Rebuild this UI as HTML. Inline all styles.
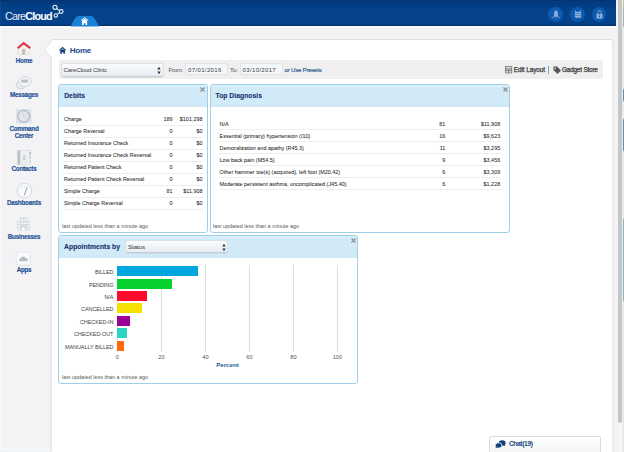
<!DOCTYPE html>
<html><head><meta charset="utf-8"><style>
html,body{margin:0;padding:0;}
body{width:624px;height:452px;overflow:hidden;position:relative;background:#f3f3f6;font-family:"Liberation Sans", sans-serif;}
.a{position:absolute;}
.t{position:absolute;white-space:nowrap;}
svg.a{overflow:visible;}
</style></head><body>
<div class="a" style="left:0px;top:0px;width:616px;height:26px;background:linear-gradient(#012f6a 0,#023a7c 1px,#033e84 6px,#04428a 12px,#04418a 24px,#02366f 25px,#023570 26px);"></div>
<div class="a" style="left:0px;top:26px;width:616px;height:2px;background:linear-gradient(#ffffff,#f7f7f9);"></div>
<div class="a" style="left:0px;top:2px;width:1px;height:23px;background:#12468a;"></div>
<div class="a" style="left:0px;top:28px;width:1px;height:421px;background:#f9f9fb;"></div>
<div class="t" style="left:5px;top:10.86px;font-size:10.8px;line-height:10.8px;color:#fff;font-weight:normal;letter-spacing:-0.8px;"><span style="font-weight:normal;color:#e4ebf5">Care</span><span style="font-weight:bold">Cloud</span></div>
<svg class="a" style="left:50px;top:3px" width="16" height="16" viewBox="0 0 16 16">
<g fill="none" stroke="#e8eef6" stroke-width="1.1">
<circle cx="5" cy="4.3" r="2.1"/><circle cx="11.2" cy="8.5" r="1.9"/><circle cx="5.8" cy="12.4" r="1.7"/>
<line x1="6.6" y1="5.5" x2="9.4" y2="7.6"/><line x1="9.6" y1="9.6" x2="7" y2="11.4"/>
</g></svg>
<svg class="a" style="left:70px;top:15px" width="30" height="12" viewBox="0 0 30 12">
<path d="M0.5 11.6 L4.6 4 Q6.2 1 8.5 1 L20.8 1 Q23.2 1 24.8 4 L29.3 11.6 Z" fill="#1a7fd6"/>
<path d="M11 5.4 L14.6 2.6 L18.2 5.4" fill="none" stroke="#fff" stroke-width="0.9"/>
<path d="M12 5.6 L14.6 3.8 L17.2 5.6 L17.2 10 L15.5 10 L15.5 8.3 L13.7 8.3 L13.7 10 L12 10 Z" fill="#fff"/>
</svg>
<div class="a" style="left:548.4000000000001px;top:7px;width:14.6px;height:14.6px;border-radius:50%;background:#0b59b0;"></div>
<div class="a" style="left:570.3000000000001px;top:7px;width:14.6px;height:14.6px;border-radius:50%;background:#0b59b0;"></div>
<div class="a" style="left:591.5px;top:7px;width:14.6px;height:14.6px;border-radius:50%;background:#0b59b0;"></div>
<svg class="a" style="left:551px;top:9.5px" width="10" height="9" viewBox="0 0 10 9">
<path d="M5 0.6 C3.6 0.6 3.1 2 3.1 3.5 L3.1 5.6 L2.2 6.8 L7.8 6.8 L6.9 5.6 L6.9 3.5 C6.9 2 6.4 0.6 5 0.6 Z" fill="#8fb0d4"/>
<path d="M1 8 L3 6.8 M9 8 L7 6.8 M5 6.8 L5 8.6" stroke="#8fb0d4" stroke-width="0.7"/>
</svg>
<svg class="a" style="left:573.5px;top:10px" width="8" height="8" viewBox="0 0 8 8">
<path d="M1 0.4 L2.4 1.8 L5.6 1.8 L7 0.4 L7 3.4 L1 3.4 Z" fill="#8fb0d4"/>
<rect x="0.6" y="3.9" width="6.8" height="1.2" fill="#8fb0d4"/>
<path d="M0.8 5.6 L7.2 5.6 L7.2 6.6 Q7.2 7.8 6 7.8 L2 7.8 Q0.8 7.8 0.8 6.6 Z" fill="#8fb0d4"/>
</svg>
<svg class="a" style="left:595.5px;top:9.8px" width="7" height="9" viewBox="0 0 7 9">
<path d="M1.8 4 L1.8 2.6 Q1.8 0.7 3.5 0.7 Q5.2 0.7 5.2 2.6 L5.2 4" fill="none" stroke="#8fb0d4" stroke-width="0.9"/>
<rect x="0.5" y="4" width="6" height="4.6" fill="#8fb0d4"/>
<rect x="3" y="5.4" width="1" height="1.8" fill="#0c58ad"/>
</svg>
<div class="a" style="left:616px;top:0px;width:2px;height:452px;background:#f3f3f3;"></div>
<div class="a" style="left:618px;top:0px;width:4px;height:452px;background:#f6f6f6;"></div>
<div class="a" style="left:618px;top:0px;width:4px;height:423px;background:#c6c6c6;border-radius:0 0 2px 2px;"></div>
<div class="a" style="left:622px;top:0px;width:1px;height:452px;background:#ececec;"></div>
<div class="a" style="left:623px;top:0px;width:1px;height:452px;background:linear-gradient(#d9c7a2 0,#c8b896 8px,#9fb0c8 12px,#9fb0c8 26px,#ececec 28px,#ececec 88px,#5f8fbf 90px,#5f8fbf 100px,#ececec 102px,#ececec 118px,#5b8dbc 120px,#5b8dbc 150px,#e6e6e6 152px,#e6e6e6 218px,#86b6cc 220px,#86b6cc 300px,#e8e8e8 302px,#e8e8e8 452px);"></div>
<svg class="a" style="left:40px;top:36px" width="580" height="416" viewBox="0 0 580 416">
<path d="M11.5 22 L11.5 420 L573 420 L573 6 Q573 3.5 570.5 3.5 L12.8 3.5 L4.2 13.3 Z" fill="#fff" stroke="#dedede" stroke-width="1"/>
</svg>
<div class="a" style="left:49.5px;top:57px;width:1.5px;height:395px;background:#e8e8ec;"></div>
<div class="a" style="left:51px;top:57px;width:1px;height:395px;background:repeating-linear-gradient(#d9dde5 0 1px,#eef0f3 1px 3px);"></div>
<div class="a" style="left:0px;top:449px;width:49.5px;height:1px;background:#fbfbfc;"></div>
<div class="a" style="left:0px;top:450px;width:51px;height:2px;background:#eef4f5;"></div>
<div class="t" style="left:-76px;width:200px;text-align:center;top:58.27px;font-size:6.3px;line-height:6.3px;color:#1c5295;font-weight:bold;letter-spacing:-0.25px;-webkit-text-stroke:0.15px #1c5295;">Home</div>
<div class="t" style="left:-76px;width:200px;text-align:center;top:92.47px;font-size:6.3px;line-height:6.3px;color:#1c5295;font-weight:bold;letter-spacing:-0.25px;-webkit-text-stroke:0.15px #1c5295;">Messages</div>
<div class="t" style="left:-76px;width:200px;text-align:center;top:126.17px;font-size:6.3px;line-height:6.3px;color:#1c5295;font-weight:bold;letter-spacing:-0.25px;-webkit-text-stroke:0.15px #1c5295;">Command</div>
<div class="t" style="left:-76px;width:200px;text-align:center;top:133.07px;font-size:6.3px;line-height:6.3px;color:#1c5295;font-weight:bold;letter-spacing:-0.25px;-webkit-text-stroke:0.15px #1c5295;">Center</div>
<div class="t" style="left:-76px;width:200px;text-align:center;top:166.47px;font-size:6.3px;line-height:6.3px;color:#1c5295;font-weight:bold;letter-spacing:-0.25px;-webkit-text-stroke:0.15px #1c5295;">Contacts</div>
<div class="t" style="left:-76px;width:200px;text-align:center;top:200.17px;font-size:6.3px;line-height:6.3px;color:#1c5295;font-weight:bold;letter-spacing:-0.25px;-webkit-text-stroke:0.15px #1c5295;">Dashboards</div>
<div class="t" style="left:-76px;width:200px;text-align:center;top:234.27px;font-size:6.3px;line-height:6.3px;color:#1c5295;font-weight:bold;letter-spacing:-0.25px;-webkit-text-stroke:0.15px #1c5295;">Businesses</div>
<div class="t" style="left:-76px;width:200px;text-align:center;top:266.77px;font-size:6.3px;line-height:6.3px;color:#1c5295;font-weight:bold;letter-spacing:-0.25px;-webkit-text-stroke:0.15px #1c5295;">Apps</div>
<svg class="a" style="left:16px;top:41px" width="16" height="14" viewBox="0 0 16 14">
<path d="M2 5.8 L7.6 1.6 L13.8 5.8 L13.8 13.6 L2 13.6 Z" fill="#f1f0ef" stroke="#dcdad8" stroke-width="0.6"/>
<rect x="6.1" y="8" width="3.2" height="5.6" fill="#c9bcb2"/>
<path d="M1.6 7.2 L7.6 2.2 L14.3 7.2" fill="none" stroke="#e1344a" stroke-width="2.1" stroke-linejoin="miter"/>
</svg>
<svg class="a" style="left:15px;top:76px" width="17" height="14" viewBox="0 0 17 14">
<path d="M5.5 5.5 C2.8 5.5 1.3 7.2 1.3 9 C1.3 10.8 2.6 12.3 5.2 12.7 L5.6 13.4 L6.6 12.6 C8.8 12.3 9.8 10.6 9.8 9.2" fill="#e9eef3" stroke="#b9c4d0" stroke-width="0.7"/>
<ellipse cx="10" cy="5.6" rx="6.2" ry="4.8" fill="#f4f7fa" stroke="#c2cad3" stroke-width="0.8"/>
<rect x="6.2" y="3.6" width="7" height="3" fill="#bcc0c6"/>
<path d="M7.5 10.6 L8.3 12.6 L10 10.3" fill="#f4f7fa" stroke="#c2cad3" stroke-width="0.6"/>
</svg>
<svg class="a" style="left:16px;top:109.3px" width="15.5" height="14.5" viewBox="0 0 15.5 14.5">
<rect x="0" y="0" width="15.5" height="14.5" fill="#dde3ea"/>
<circle cx="7.7" cy="7.3" r="6.1" fill="#d3d8de" stroke="#a8afb7" stroke-width="0.9"/>
<circle cx="7.7" cy="7.3" r="4.6" fill="#e3e7ec"/>
<path d="M7.2 3.6 L7.7 7.3 L9.5 9" fill="none" stroke="#c3cad3" stroke-width="0.7"/>
</svg>
<svg class="a" style="left:17px;top:150px" width="14" height="15" viewBox="0 0 14 15">
<rect x="0.4" y="0.4" width="12.4" height="14.2" fill="#eef1f4" stroke="#d4d8dc" stroke-width="0.6"/>
<rect x="0.6" y="0.6" width="2.6" height="13.8" fill="#bfbfbf"/>
<rect x="12.6" y="2" width="1.2" height="3" fill="#b4b4b4"/><rect x="12.6" y="6.3" width="1.2" height="2.6" fill="#c4c8cc"/><rect x="12.6" y="10" width="1.2" height="2.4" fill="#d0d4d8"/>
<rect x="6.5" y="5.5" width="1.3" height="1.9" fill="#b0b0b0"/><path d="M5.5 9 L9 9" stroke="#b5b5b5" stroke-width="1"/>
<path d="M5 11.6 L10.5 11.6" stroke="#d8dce0" stroke-width="0.5"/>
</svg>
<svg class="a" style="left:15.5px;top:183px" width="17" height="16" viewBox="0 0 17 16">
<circle cx="8.5" cy="7.7" r="7.3" fill="#fafbfc" stroke="#cdd3da" stroke-width="0.9"/>
<path d="M11.2 4.3 L8.2 12.5" stroke="#8d99a8" stroke-width="1"/>
<path d="M4.5 5 Q8 2.8 11.5 4" fill="none" stroke="#b8c2cd" stroke-width="0.7" stroke-dasharray="1 0.8"/>
</svg>
<svg class="a" style="left:17px;top:217px" width="13" height="14" viewBox="0 0 13 14">
<path d="M2.6 0.5 L10.3 0.5 L10.3 4 L12.6 4 L12.6 13.8 L0.3 13.8 L0.3 4 L2.6 4 Z" fill="#d3dbe3"/>
<g fill="#f6f8fa">
<rect x="3.5" y="2" width="2.2" height="1.8"/><rect x="7.2" y="2" width="2.2" height="1.8"/>
<rect x="1.2" y="5.3" width="2" height="1.8"/><rect x="4.3" y="5.3" width="2" height="1.8"/><rect x="7.3" y="5.3" width="2" height="1.8"/><rect x="10.2" y="5.3" width="1.6" height="1.8"/>
<rect x="1.2" y="8.3" width="2" height="1.8"/><rect x="10.2" y="8.3" width="1.6" height="1.8"/>
<rect x="1.2" y="11.2" width="2" height="1.8"/><rect x="10.2" y="11.2" width="1.6" height="1.8"/>
<path d="M4.8 13.8 L4.8 10.8 Q6.45 9 8.1 10.8 L8.1 13.8 Z"/>
</g>
</svg>
<svg class="a" style="left:16px;top:251.5px" width="15" height="14" viewBox="0 0 15 14">
<rect x="0.4" y="0.4" width="14" height="13.2" rx="1.8" fill="#f8fafc" stroke="#dde2e8" stroke-width="0.7"/>
<path d="M4.6 9.2 Q2.8 9.2 2.8 7.9 Q2.8 6.5 4.4 6.6 Q4.9 4.3 7.3 4.4 Q9.4 4.5 9.8 6.2 Q12 6 12 7.8 Q12 9.2 10.5 9.2 Z" fill="#b9bdc2"/>
<path d="M1 12.2 L14 12.2" stroke="#e6eaee" stroke-width="0.6"/>
</svg>
<svg class="a" style="left:58.5px;top:47.3px" width="7.2" height="6.8" viewBox="0 0 7.2 6.8">
<path d="M0.4 3.4 L3.6 0.6 L6.8 3.4" fill="none" stroke="#133f7c" stroke-width="1.2"/>
<path d="M1.2 3.6 L3.6 1.9 L6 3.6 L6 6.8 L4.4 6.8 L4.4 5.2 L2.8 5.2 L2.8 6.8 L1.2 6.8 Z" fill="#133f7c"/>
</svg>
<div class="t" style="left:69.7px;top:47.34px;font-size:8.1px;line-height:8.1px;color:#1a4b90;font-weight:bold;letter-spacing:-0.3px;">Home</div>
<div class="a" style="left:58.5px;top:60px;width:544px;height:19px;background:#efefef;border-radius:2px;"></div>
<div class="a" style="left:60.5px;top:63px;width:103.5px;height:13.8px;box-sizing:border-box;border:1px solid #dbe0e7;border-bottom-color:#c5ccd5;border-radius:3px;background:linear-gradient(#fafbfd,#e8ecf1);box-shadow:0 0.6px 0.6px rgba(60,80,110,0.18);"></div>
<div class="t" style="left:63.5px;top:67.04px;font-size:6.1px;line-height:6.1px;color:#3a3a3a;font-weight:normal;letter-spacing:-0.14px;">CareCloud Clinic</div>
<svg class="a" style="left:157px;top:65.5px" width="4" height="9" viewBox="0 0 4 9"><path d="M0.3 3.5 L2 0.8 L3.7 3.5Z M0.3 5.5 L2 8.2 L3.7 5.5Z" fill="#1f3350"/></svg>
<div class="t" style="left:168.5px;top:67.12px;font-size:6.0px;line-height:6.0px;color:#505050;font-weight:normal;letter-spacing:-0.24px;">From:</div>
<div class="a" style="left:185px;top:62.8px;width:43px;height:12.6px;box-sizing:border-box;border:1px solid #dfe3e8;border-radius:2px;background:#f4f7fa;"></div>
<div class="t" style="left:188px;top:67.12px;font-size:6.0px;line-height:6.0px;color:#404040;font-weight:normal;letter-spacing:0.37px;">07/01/2016</div>
<div class="t" style="left:230px;top:67.12px;font-size:6.0px;line-height:6.0px;color:#505050;font-weight:normal;">To:</div>
<div class="a" style="left:240px;top:62.8px;width:42.5px;height:12.6px;box-sizing:border-box;border:1px solid #dfe3e8;border-radius:2px;background:#f4f7fa;"></div>
<div class="t" style="left:242.6px;top:67.12px;font-size:6.0px;line-height:6.0px;color:#404040;font-weight:normal;letter-spacing:0.34px;">03/10/2017</div>
<div class="t" style="left:284.6px;top:67.04px;font-size:6.1px;line-height:6.1px;color:#2a5a92;font-weight:normal;letter-spacing:-0.24px;-webkit-text-stroke:0.15px #2a5a92;">or Use Presets</div>
<svg class="a" style="left:504.8px;top:66px" width="7.2" height="7.4" viewBox="0 0 7.2 7.4"><rect x="0" y="0" width="7.2" height="7.4" fill="#7d7d7d"/><rect x="0.8" y="0.8" width="5.6" height="1.6" fill="#d8d8d8"/><rect x="0.8" y="3.2" width="5.6" height="1" fill="#bdbdbd"/><rect x="0.8" y="5" width="2.3" height="1.6" fill="#d8d8d8"/><rect x="4.1" y="5" width="2.3" height="1.6" fill="#d8d8d8"/></svg>
<div class="t" style="left:513.8px;top:66.78px;font-size:6.4px;line-height:6.4px;color:#3a3a3a;font-weight:normal;letter-spacing:-0.08px;-webkit-text-stroke:0.25px #3a3a3a;">Edit Layout</div>
<div class="a" style="left:548.3px;top:65.6px;width:0.8px;height:8.2px;background:#9a9a9a;"></div>
<svg class="a" style="left:552.5px;top:65.5px" width="8.5" height="8.5" viewBox="0 0 8.5 8.5"><path d="M0.5 0.5 L4 0.5 L8 4.5 L4.5 8 L0.5 4 Z" fill="#555"/><circle cx="2.2" cy="2.2" r="0.8" fill="#ededed"/></svg>
<div class="t" style="left:562px;top:66.78px;font-size:6.4px;line-height:6.4px;color:#3a3a3a;font-weight:normal;letter-spacing:-0.19px;-webkit-text-stroke:0.25px #3a3a3a;">Gadget Store</div>
<div class="a" style="left:58px;top:84px;width:149.5px;height:148.5px;box-sizing:border-box;border:1px solid #9dcfea;border-radius:3px;background:#fff;overflow:hidden;"></div>
<div class="a" style="left:59px;top:85px;width:147.5px;height:22px;background:#d2ebf8;background-image:radial-gradient(circle at 2px 1.5px,rgba(215,205,225,0.2) 0.5px,transparent 0.9px),radial-gradient(circle at 0px 4.5px,rgba(215,205,225,0.2) 0.5px,transparent 0.9px);background-size:4px 6px;border-radius:2px 2px 0 0;"></div>
<div class="a" style="left:59px;top:106px;width:147.5px;height:1px;background:#cfe8f6;"></div>
<div class="a" style="left:59px;top:85px;width:147.5px;height:1.5px;background:#d9eff9;border-radius:2px 2px 0 0;"></div>
<div class="t" style="left:64.2px;top:93.24px;font-size:6.8px;line-height:6.8px;color:#17356f;font-weight:bold;-webkit-text-stroke:0.12px #17356f;">Debits</div>
<svg class="a" style="left:200.2px;top:87.4px" width="5" height="5" viewBox="0 0 5 5"><path d="M0.5 0.5 L4.5 4.5 M4.5 0.5 L0.5 4.5" stroke="#8c8c8c" stroke-width="1.1"/></svg>
<div class="a" style="left:210px;top:84px;width:299.5px;height:148.5px;box-sizing:border-box;border:1px solid #9dcfea;border-radius:3px;background:#fff;overflow:hidden;"></div>
<div class="a" style="left:211px;top:85px;width:297.5px;height:22px;background:#d2ebf8;background-image:radial-gradient(circle at 2px 1.5px,rgba(215,205,225,0.2) 0.5px,transparent 0.9px),radial-gradient(circle at 0px 4.5px,rgba(215,205,225,0.2) 0.5px,transparent 0.9px);background-size:4px 6px;border-radius:2px 2px 0 0;"></div>
<div class="a" style="left:211px;top:106px;width:297.5px;height:1px;background:#cfe8f6;"></div>
<div class="a" style="left:211px;top:85px;width:297.5px;height:1.5px;background:#d9eff9;border-radius:2px 2px 0 0;"></div>
<div class="t" style="left:215.5px;top:93.23px;font-size:6.82px;line-height:6.82px;color:#17356f;font-weight:bold;-webkit-text-stroke:0.12px #17356f;">Top Diagnosis</div>
<svg class="a" style="left:502.5px;top:87.4px" width="5" height="5" viewBox="0 0 5 5"><path d="M0.5 0.5 L4.5 4.5 M4.5 0.5 L0.5 4.5" stroke="#8c8c8c" stroke-width="1.1"/></svg>
<div class="a" style="left:58px;top:235px;width:300.3px;height:149px;box-sizing:border-box;border:1px solid #9dcfea;border-radius:3px;background:#fff;overflow:hidden;"></div>
<div class="a" style="left:59px;top:236px;width:298.3px;height:22px;background:#d2ebf8;background-image:radial-gradient(circle at 2px 1.5px,rgba(215,205,225,0.2) 0.5px,transparent 0.9px),radial-gradient(circle at 0px 4.5px,rgba(215,205,225,0.2) 0.5px,transparent 0.9px);background-size:4px 6px;border-radius:2px 2px 0 0;"></div>
<div class="a" style="left:59px;top:257px;width:298.3px;height:1px;background:#cfe8f6;"></div>
<div class="a" style="left:59px;top:236px;width:298.3px;height:1.5px;background:#d9eff9;border-radius:2px 2px 0 0;"></div>
<div class="t" style="left:64px;top:244.47px;font-size:6.89px;line-height:6.89px;color:#17356f;font-weight:bold;-webkit-text-stroke:0.12px #17356f;">Appointments by</div>
<svg class="a" style="left:351px;top:238.4px" width="5" height="5" viewBox="0 0 5 5"><path d="M0.5 0.5 L4.5 4.5 M4.5 0.5 L0.5 4.5" stroke="#8c8c8c" stroke-width="1.1"/></svg>
<div class="t" style="left:64px;top:117.31px;font-size:5.42px;line-height:5.42px;color:#262626;font-weight:normal;-webkit-text-stroke:0.04px #262626;">Charge</div>
<div class="t" style="right:451.5px;top:117.29px;font-size:5.45px;line-height:5.45px;color:#262626;font-weight:normal;-webkit-text-stroke:0.04px #262626;">189</div>
<div class="t" style="right:421.5px;top:117.29px;font-size:5.45px;line-height:5.45px;color:#262626;font-weight:normal;-webkit-text-stroke:0.04px #262626;">$101,298</div>
<div class="a" style="left:64px;top:125.0px;width:138.5px;height:1px;background:#efefef;"></div>
<div class="t" style="left:64px;top:129.31px;font-size:5.42px;line-height:5.42px;color:#262626;font-weight:normal;-webkit-text-stroke:0.04px #262626;">Charge Reversal</div>
<div class="t" style="right:451.5px;top:129.29px;font-size:5.45px;line-height:5.45px;color:#262626;font-weight:normal;-webkit-text-stroke:0.04px #262626;">0</div>
<div class="t" style="right:421.5px;top:129.29px;font-size:5.45px;line-height:5.45px;color:#262626;font-weight:normal;-webkit-text-stroke:0.04px #262626;">$0</div>
<div class="a" style="left:64px;top:137.0px;width:138.5px;height:1px;background:#efefef;"></div>
<div class="t" style="left:64px;top:141.31px;font-size:5.42px;line-height:5.42px;color:#262626;font-weight:normal;-webkit-text-stroke:0.04px #262626;">Returned Insurance Check</div>
<div class="t" style="right:451.5px;top:141.29px;font-size:5.45px;line-height:5.45px;color:#262626;font-weight:normal;-webkit-text-stroke:0.04px #262626;">0</div>
<div class="t" style="right:421.5px;top:141.29px;font-size:5.45px;line-height:5.45px;color:#262626;font-weight:normal;-webkit-text-stroke:0.04px #262626;">$0</div>
<div class="a" style="left:64px;top:149.0px;width:138.5px;height:1px;background:#efefef;"></div>
<div class="t" style="left:64px;top:153.31px;font-size:5.42px;line-height:5.42px;color:#262626;font-weight:normal;-webkit-text-stroke:0.04px #262626;">Returned Insurance Check Reversal</div>
<div class="t" style="right:451.5px;top:153.29px;font-size:5.45px;line-height:5.45px;color:#262626;font-weight:normal;-webkit-text-stroke:0.04px #262626;">0</div>
<div class="t" style="right:421.5px;top:153.29px;font-size:5.45px;line-height:5.45px;color:#262626;font-weight:normal;-webkit-text-stroke:0.04px #262626;">$0</div>
<div class="a" style="left:64px;top:161.0px;width:138.5px;height:1px;background:#efefef;"></div>
<div class="t" style="left:64px;top:165.31px;font-size:5.42px;line-height:5.42px;color:#262626;font-weight:normal;-webkit-text-stroke:0.04px #262626;">Returned Patient Check</div>
<div class="t" style="right:451.5px;top:165.29px;font-size:5.45px;line-height:5.45px;color:#262626;font-weight:normal;-webkit-text-stroke:0.04px #262626;">0</div>
<div class="t" style="right:421.5px;top:165.29px;font-size:5.45px;line-height:5.45px;color:#262626;font-weight:normal;-webkit-text-stroke:0.04px #262626;">$0</div>
<div class="a" style="left:64px;top:173.0px;width:138.5px;height:1px;background:#efefef;"></div>
<div class="t" style="left:64px;top:177.31px;font-size:5.42px;line-height:5.42px;color:#262626;font-weight:normal;-webkit-text-stroke:0.04px #262626;">Returned Patient Check Reversal</div>
<div class="t" style="right:451.5px;top:177.29px;font-size:5.45px;line-height:5.45px;color:#262626;font-weight:normal;-webkit-text-stroke:0.04px #262626;">0</div>
<div class="t" style="right:421.5px;top:177.29px;font-size:5.45px;line-height:5.45px;color:#262626;font-weight:normal;-webkit-text-stroke:0.04px #262626;">$0</div>
<div class="a" style="left:64px;top:185.0px;width:138.5px;height:1px;background:#efefef;"></div>
<div class="t" style="left:64px;top:189.31px;font-size:5.42px;line-height:5.42px;color:#262626;font-weight:normal;-webkit-text-stroke:0.04px #262626;">Simple Charge</div>
<div class="t" style="right:451.5px;top:189.29px;font-size:5.45px;line-height:5.45px;color:#262626;font-weight:normal;-webkit-text-stroke:0.04px #262626;">81</div>
<div class="t" style="right:421.5px;top:189.29px;font-size:5.45px;line-height:5.45px;color:#262626;font-weight:normal;-webkit-text-stroke:0.04px #262626;">$11,908</div>
<div class="a" style="left:64px;top:197.0px;width:138.5px;height:1px;background:#efefef;"></div>
<div class="t" style="left:64px;top:201.31px;font-size:5.42px;line-height:5.42px;color:#262626;font-weight:normal;-webkit-text-stroke:0.04px #262626;">Simple Charge Reversal</div>
<div class="t" style="right:451.5px;top:201.29px;font-size:5.45px;line-height:5.45px;color:#262626;font-weight:normal;-webkit-text-stroke:0.04px #262626;">0</div>
<div class="t" style="right:421.5px;top:201.29px;font-size:5.45px;line-height:5.45px;color:#262626;font-weight:normal;-webkit-text-stroke:0.04px #262626;">$0</div>
<div class="a" style="left:64px;top:209.0px;width:138.5px;height:1px;background:#efefef;"></div>
<div class="t" style="left:62px;top:223.87px;font-size:5.35px;line-height:5.35px;color:#555;font-weight:normal;letter-spacing:0.05px;">last updated less than a minute ago</div>
<div class="t" style="left:219.6px;top:121.59px;font-size:5.45px;line-height:5.45px;color:#262626;font-weight:normal;-webkit-text-stroke:0.04px #262626;">N/A</div>
<div class="t" style="right:178.7px;top:121.59px;font-size:5.45px;line-height:5.45px;color:#262626;font-weight:normal;-webkit-text-stroke:0.04px #262626;">81</div>
<div class="t" style="right:123.80000000000001px;top:121.59px;font-size:5.45px;line-height:5.45px;color:#262626;font-weight:normal;-webkit-text-stroke:0.04px #262626;">$11,908</div>
<div class="a" style="left:219px;top:129.4px;width:281.7px;height:1px;background:#efefef;"></div>
<div class="t" style="left:219.6px;top:133.59px;font-size:5.45px;line-height:5.45px;color:#262626;font-weight:normal;-webkit-text-stroke:0.04px #262626;">Essential (primary) hypertension (I10)</div>
<div class="t" style="right:178.7px;top:133.59px;font-size:5.45px;line-height:5.45px;color:#262626;font-weight:normal;-webkit-text-stroke:0.04px #262626;">16</div>
<div class="t" style="right:123.80000000000001px;top:133.59px;font-size:5.45px;line-height:5.45px;color:#262626;font-weight:normal;-webkit-text-stroke:0.04px #262626;">$9,623</div>
<div class="a" style="left:219px;top:141.4px;width:281.7px;height:1px;background:#efefef;"></div>
<div class="t" style="left:219.6px;top:145.59px;font-size:5.45px;line-height:5.45px;color:#262626;font-weight:normal;-webkit-text-stroke:0.04px #262626;">Demoralization and apathy (R45.3)</div>
<div class="t" style="right:178.7px;top:145.59px;font-size:5.45px;line-height:5.45px;color:#262626;font-weight:normal;-webkit-text-stroke:0.04px #262626;">11</div>
<div class="t" style="right:123.80000000000001px;top:145.59px;font-size:5.45px;line-height:5.45px;color:#262626;font-weight:normal;-webkit-text-stroke:0.04px #262626;">$3,295</div>
<div class="a" style="left:219px;top:153.4px;width:281.7px;height:1px;background:#efefef;"></div>
<div class="t" style="left:219.6px;top:157.59px;font-size:5.45px;line-height:5.45px;color:#262626;font-weight:normal;-webkit-text-stroke:0.04px #262626;">Low back pain (M54.5)</div>
<div class="t" style="right:178.7px;top:157.59px;font-size:5.45px;line-height:5.45px;color:#262626;font-weight:normal;-webkit-text-stroke:0.04px #262626;">9</div>
<div class="t" style="right:123.80000000000001px;top:157.59px;font-size:5.45px;line-height:5.45px;color:#262626;font-weight:normal;-webkit-text-stroke:0.04px #262626;">$3,456</div>
<div class="a" style="left:219px;top:165.4px;width:281.7px;height:1px;background:#efefef;"></div>
<div class="t" style="left:219.6px;top:169.59px;font-size:5.45px;line-height:5.45px;color:#262626;font-weight:normal;-webkit-text-stroke:0.04px #262626;">Other hammer toe(s) (acquired), left foot (M20.42)</div>
<div class="t" style="right:178.7px;top:169.59px;font-size:5.45px;line-height:5.45px;color:#262626;font-weight:normal;-webkit-text-stroke:0.04px #262626;">6</div>
<div class="t" style="right:123.80000000000001px;top:169.59px;font-size:5.45px;line-height:5.45px;color:#262626;font-weight:normal;-webkit-text-stroke:0.04px #262626;">$3,309</div>
<div class="a" style="left:219px;top:177.4px;width:281.7px;height:1px;background:#efefef;"></div>
<div class="t" style="left:219.6px;top:181.59px;font-size:5.45px;line-height:5.45px;color:#262626;font-weight:normal;-webkit-text-stroke:0.04px #262626;">Moderate persistent asthma, uncomplicated (J45.40)</div>
<div class="t" style="right:178.7px;top:181.59px;font-size:5.45px;line-height:5.45px;color:#262626;font-weight:normal;-webkit-text-stroke:0.04px #262626;">6</div>
<div class="t" style="right:123.80000000000001px;top:181.59px;font-size:5.45px;line-height:5.45px;color:#262626;font-weight:normal;-webkit-text-stroke:0.04px #262626;">$1,228</div>
<div class="a" style="left:219px;top:189.4px;width:281.7px;height:1px;background:#efefef;"></div>
<div class="t" style="left:213px;top:223.87px;font-size:5.35px;line-height:5.35px;color:#555;font-weight:normal;letter-spacing:0.05px;">last updated less than a minute ago</div>
<div class="a" style="left:125.4px;top:240.4px;width:102.8px;height:12.6px;box-sizing:border-box;border:1px solid #dbe0e7;border-bottom-color:#c5ccd5;border-radius:3px;background:linear-gradient(#fafbfd,#e8ecf1);box-shadow:0 0.6px 0.6px rgba(60,80,110,0.18);"></div>
<div class="t" style="left:128px;top:244.05px;font-size:6.2px;line-height:6.2px;color:#333;font-weight:normal;letter-spacing:-0.1px;">Status</div>
<svg class="a" style="left:222px;top:242.5px" width="4" height="9" viewBox="0 0 4 9"><path d="M0.3 3.5 L2 0.8 L3.7 3.5Z M0.3 5.5 L2 8.2 L3.7 5.5Z" fill="#1f3350"/></svg>
<div class="a" style="left:161.0px;top:264.5px;width:1px;height:87px;background:#dedede;"></div>
<div class="a" style="left:205.0px;top:264.5px;width:1px;height:87px;background:#dedede;"></div>
<div class="a" style="left:249.0px;top:264.5px;width:1px;height:87px;background:#dedede;"></div>
<div class="a" style="left:293.0px;top:264.5px;width:1px;height:87px;background:#dedede;"></div>
<div class="a" style="left:337.0px;top:264.5px;width:1px;height:87px;background:#dedede;"></div>
<div class="a" style="left:116.9px;top:264.5px;width:1px;height:87px;background:#e4e8ee;"></div>
<div class="a" style="left:117.4px;top:266.2px;width:80.52000000000001px;height:10px;background:#00a6dd;"></div>
<div class="t" style="right:510.6px;top:270.14px;font-size:5.5px;line-height:5.5px;color:#444;font-weight:normal;letter-spacing:-0.08px;">BILLED</div>
<div class="a" style="left:117.4px;top:278.59999999999997px;width:54.78px;height:10px;background:#06d02e;"></div>
<div class="t" style="right:510.6px;top:282.54px;font-size:5.5px;line-height:5.5px;color:#444;font-weight:normal;letter-spacing:-0.08px;">PENDING</div>
<div class="a" style="left:117.4px;top:291.0px;width:29.260000000000005px;height:10px;background:#ff0a2c;"></div>
<div class="t" style="right:510.6px;top:294.94px;font-size:5.5px;line-height:5.5px;color:#444;font-weight:normal;letter-spacing:-0.08px;">N/A</div>
<div class="a" style="left:117.4px;top:303.4px;width:24.860000000000003px;height:10px;background:#f5e100;"></div>
<div class="t" style="right:510.6px;top:307.34px;font-size:5.5px;line-height:5.5px;color:#444;font-weight:normal;letter-spacing:-0.08px;">CANCELLED</div>
<div class="a" style="left:117.4px;top:315.8px;width:12.76px;height:10px;background:#9b0099;"></div>
<div class="t" style="right:510.6px;top:319.74px;font-size:5.5px;line-height:5.5px;color:#444;font-weight:normal;letter-spacing:-0.08px;">CHECKED-IN</div>
<div class="a" style="left:117.4px;top:328.2px;width:9.46px;height:10px;background:#2ad3c3;"></div>
<div class="t" style="right:510.6px;top:332.14px;font-size:5.5px;line-height:5.5px;color:#444;font-weight:normal;letter-spacing:-0.08px;">CHECKED-OUT</div>
<div class="a" style="left:117.4px;top:340.6px;width:6.6000000000000005px;height:10px;background:#ff6b0c;"></div>
<div class="t" style="right:510.6px;top:344.54px;font-size:5.5px;line-height:5.5px;color:#444;font-weight:normal;letter-spacing:-0.08px;">MANUALLY BILLED</div>
<div class="t" style="left:17.400000000000006px;width:200px;text-align:center;top:354.56px;font-size:5.6px;line-height:5.6px;color:#555;font-weight:normal;">0</div>
<div class="t" style="left:61.400000000000006px;width:200px;text-align:center;top:354.56px;font-size:5.6px;line-height:5.6px;color:#555;font-weight:normal;">20</div>
<div class="t" style="left:105.4px;width:200px;text-align:center;top:354.56px;font-size:5.6px;line-height:5.6px;color:#555;font-weight:normal;">40</div>
<div class="t" style="left:149.4px;width:200px;text-align:center;top:354.56px;font-size:5.6px;line-height:5.6px;color:#555;font-weight:normal;">60</div>
<div class="t" style="left:193.39999999999998px;width:200px;text-align:center;top:354.56px;font-size:5.6px;line-height:5.6px;color:#555;font-weight:normal;">80</div>
<div class="t" style="left:237.40000000000003px;width:200px;text-align:center;top:354.56px;font-size:5.6px;line-height:5.6px;color:#555;font-weight:normal;">100</div>
<div class="t" style="left:127.5px;width:200px;text-align:center;top:361.75px;font-size:6.2px;line-height:6.2px;color:#2c5f93;font-weight:bold;">Percent</div>
<div class="t" style="left:62px;top:375.47px;font-size:5.35px;line-height:5.35px;color:#555;font-weight:normal;letter-spacing:0.05px;">last updated less than a minute ago</div>
<div class="a" style="left:489.2px;top:436.2px;width:112px;height:20px;box-sizing:border-box;border:1px solid #dcdcdc;border-radius:2px;background:linear-gradient(#fff,#f3f3f3);"></div>
<svg class="a" style="left:494.5px;top:439.8px" width="11" height="8.5" viewBox="0 0 11 8.5"><ellipse cx="7.2" cy="3" rx="3.4" ry="2.7" fill="#123f7a"/><path d="M9.5 5 L10.4 6.3 L8 5.6Z" fill="#123f7a"/><ellipse cx="3.6" cy="5.4" rx="3.3" ry="2.7" fill="#123f7a" stroke="#f8f8f8" stroke-width="0.8"/><path d="M1.2 7 L0.3 8.3 L2.6 7.7Z" fill="#123f7a"/></svg>
<div class="t" style="left:508.9px;top:440.61px;font-size:6.6px;line-height:6.6px;color:#17437f;font-weight:bold;letter-spacing:-0.33px;">Chat(19)</div>

</body></html>
